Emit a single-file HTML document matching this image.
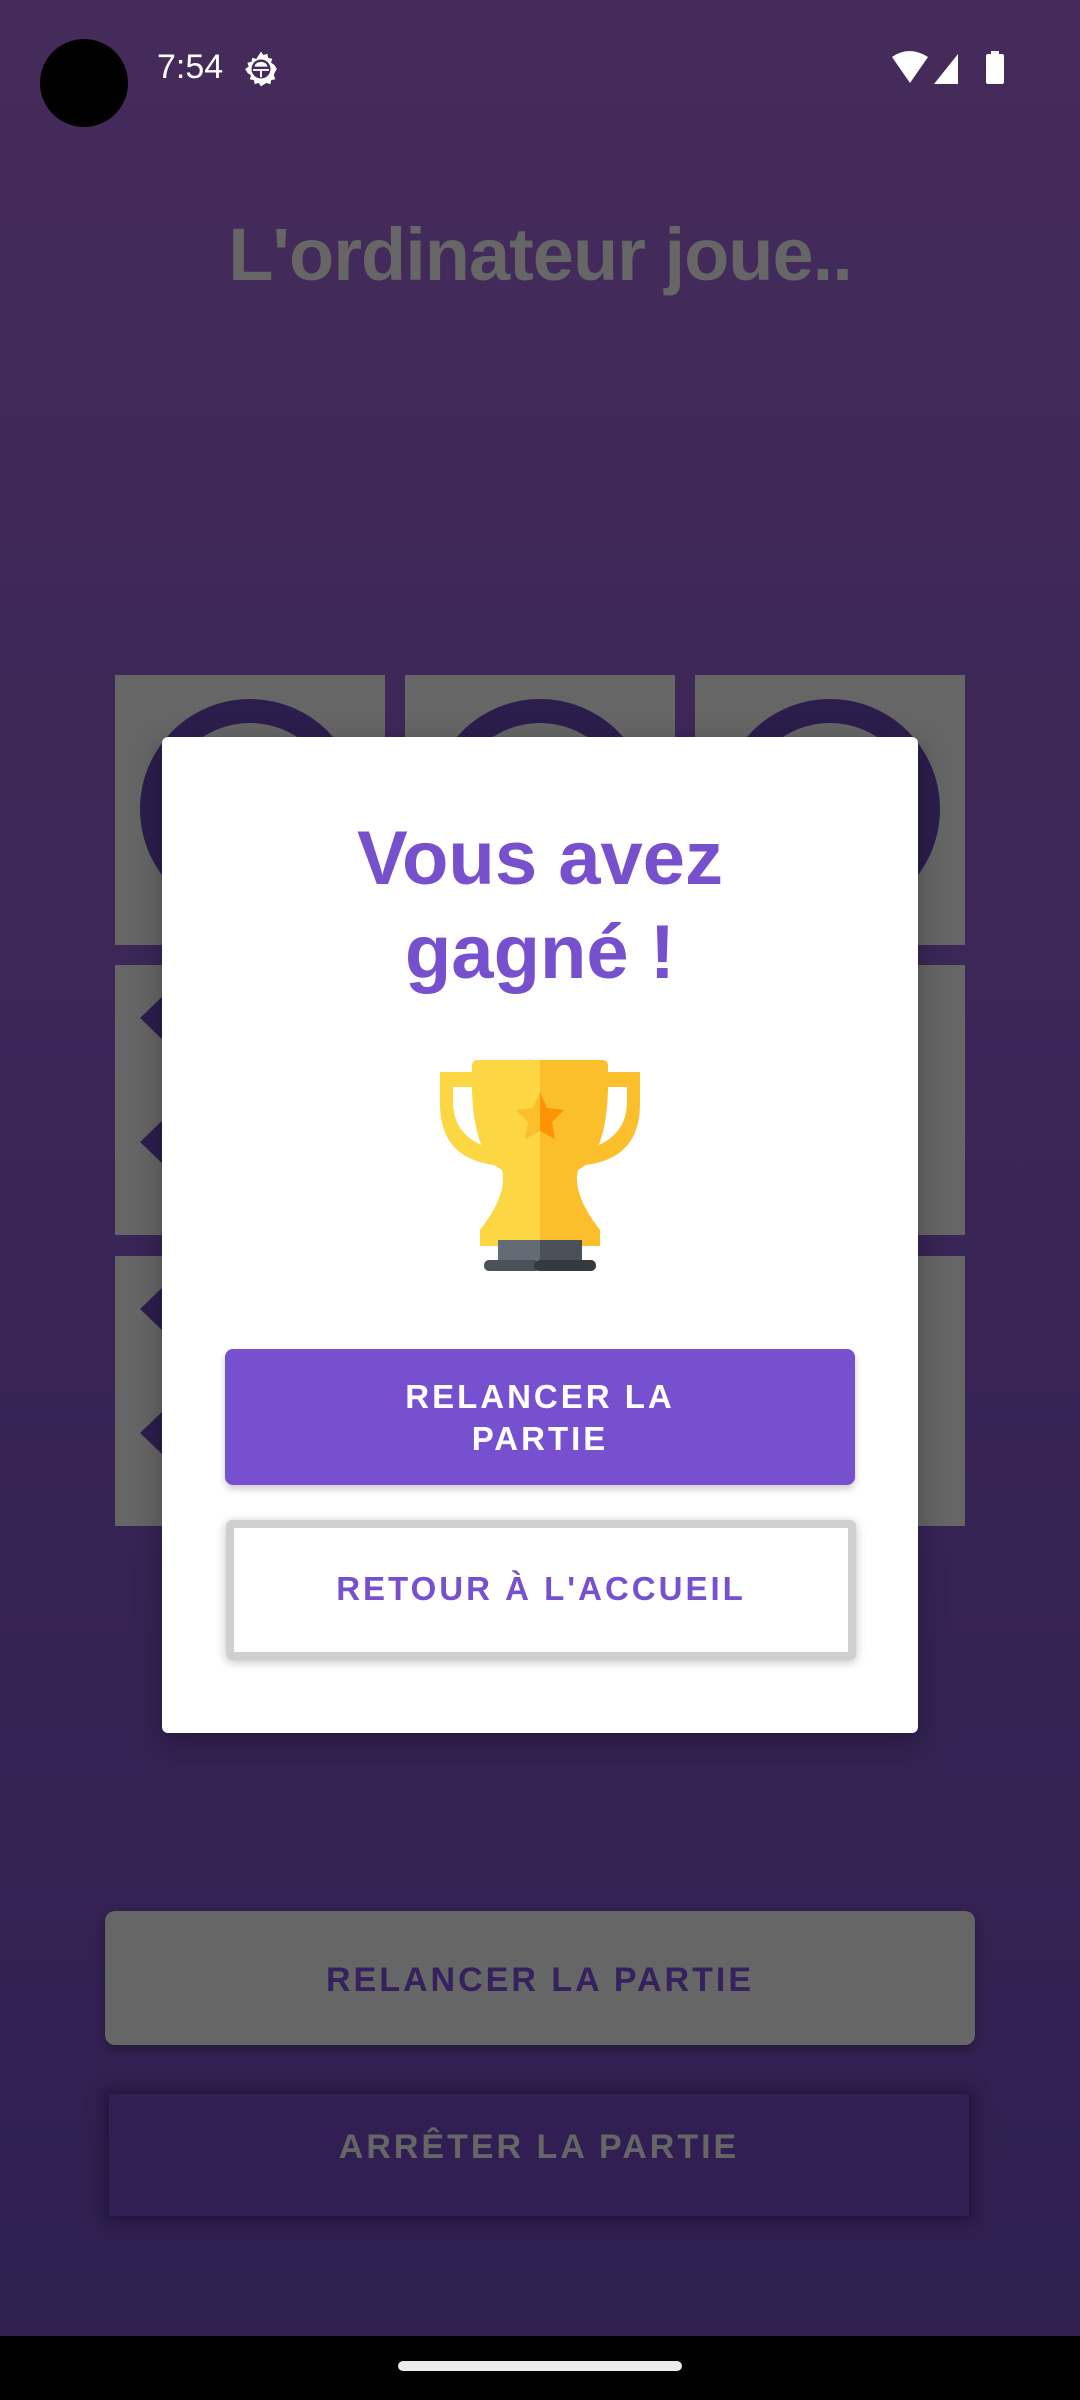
<!DOCTYPE html>
<html><head><meta charset="utf-8"><style>
*{margin:0;padding:0;box-sizing:border-box}
body{width:1080px;height:2400px;overflow:hidden;position:relative;background:linear-gradient(#452b5a 0%,#3b2758 40%,#2f1f50 100%);font-family:"Liberation Sans",Roboto,sans-serif}
.abs{position:absolute}
.cell{position:absolute;background:#666;width:270px;height:270px;overflow:hidden}
.ring{position:absolute;left:25px;top:24px;width:220px;height:220px;border-radius:50%;border:24px solid #2c1e4c}
.tri{position:absolute;width:0;height:0;border-top:23px solid transparent;border-bottom:23px solid transparent;border-right:24px solid #2c1e4c;left:25px}
.btxt{font-weight:bold;letter-spacing:3px;text-align:center}
</style></head><body>
<div class="abs" style="left:40px;top:39px;width:88px;height:88px;border-radius:50%;background:#000"></div>
<div class="abs" style="left:157px;top:48px;color:#fff;font-size:34px">7:54</div>
<svg class="abs" style="left:242px;top:50px" width="38" height="38" viewBox="0 0 24 24"><path fill="#fff" d="M12 1l1.5 2.2 2.5-.8.5 2.6 2.6.5-.8 2.5L20.5 9.5 22 12l-1.5 2.5-.3 1.5.8 2.5-2.6.5-.5 2.6-2.5-.8L12 23l-1.5-2.2-2.5.8-.5-2.6-2.6-.5.8-2.5L3.5 14.5 2 12l2.2-1.5-.8-2.5 2.6-.5.5-2.6 2.5.8z"/><circle cx="12" cy="12" r="6" fill="#452b5a"/><path fill="#fff" d="M7 12h10v1.2H12.6v4H11.4v-4H7z M8 10.5a4 3 0 0 1 8 0z"/></svg>
<svg class="abs" style="left:890px;top:50px" width="120" height="36" viewBox="0 0 120 36"><path fill="#fff" d="M2 7q17-12 36 0L20 33z"/><path fill="#fff" d="M44 34L68 4v30z"/><rect x="96" y="4" width="18" height="30" rx="2" fill="#fff"/><rect x="101" y="1" width="8" height="4" fill="#fff"/></svg>
<div class="abs" style="left:0;width:1080px;top:212px;text-align:center;color:#666;font-weight:bold;font-size:74px;letter-spacing:-1px">L'ordinateur joue..</div>

<div class="cell" style="left:115px;top:675px"><div class="ring"></div></div>
<div class="cell" style="left:405px;top:675px"><div class="ring"></div></div>
<div class="cell" style="left:695px;top:675px"><div class="ring"></div></div>
<div class="cell" style="left:115px;top:965px"><div class="tri" style="top:30px"></div><div class="tri" style="top:154px"></div></div>
<div class="cell" style="left:405px;top:965px"></div>
<div class="cell" style="left:695px;top:965px"></div>
<div class="cell" style="left:115px;top:1256px"><div class="tri" style="top:30px"></div><div class="tri" style="top:154px"></div></div>
<div class="cell" style="left:405px;top:1256px"></div>
<div class="cell" style="left:695px;top:1256px"></div>

<div class="abs" style="left:162px;top:737px;width:756px;height:996px;background:#fff;border-radius:6px;box-shadow:0 10px 30px rgba(0,0,0,.3)"></div>
<div class="abs" style="left:162px;width:756px;top:812px;text-align:center;color:#7750ce;font-weight:bold;font-size:76px;line-height:94px">Vous avez<br>gagné !</div>
<svg class="abs" style="left:434px;top:1060px" width="212" height="212" viewBox="0 0 212 212">
<path d="M6 12h56v15H19v14q0 42 50 50l4 15Q6 104 6 44z" fill="#fdd644"/>
<path d="M206 12h-56v15h43v14q0 42-50 50l-4 15q67-2 67-62z" fill="#fbbf2c"/>
<path d="M38 6q0-6 6-6h62v186H46v-16q28-36 22-60Q40 96 38 30z" fill="#fdd644"/>
<path d="M174 6q0-6-6-6h-62v186h60v-16q-28-36-22-60q28-14 30-80z" fill="#fbbf2c"/>
<path d="M106 32l7 16 17 2-12 12 3 17-15-8z" fill="#fe9305"/>
<path d="M106 32l-7 16-17 2 12 12-3 17 15-8z" fill="#fbbf2c"/>
<rect x="64" y="180" width="42" height="20" fill="#636b74"/><rect x="106" y="180" width="42" height="20" fill="#4a5158"/>
<rect x="50" y="200" width="56" height="11" rx="5" fill="#4a5158"/><rect x="100" y="200" width="62" height="11" rx="5" fill="#353a3f"/>
</svg>
<div class="abs btxt" style="left:225px;top:1349px;width:630px;height:136px;background:#7750d0;border-radius:8px;color:#fff;font-size:33px;line-height:42px;padding-top:27px;box-shadow:0 4px 8px rgba(0,0,0,.2)">RELANCER LA<br>PARTIE</div>
<div class="abs" style="left:226px;top:1520px;width:630px;height:140px;border:8px solid #cfcfcf;border-radius:6px;box-shadow:0 2px 10px rgba(0,0,0,.25)"></div>
<div class="abs btxt" style="left:234px;top:1536px;width:614px;height:116px;background:#fff;color:#7750d0;font-size:33px;line-height:106px">RETOUR À L'ACCUEIL</div>

<div class="abs btxt" style="left:105px;top:1911px;width:870px;height:134px;background:#666;border-radius:10px;color:#34215d;font-size:34px;line-height:138px;box-shadow:0 4px 10px rgba(0,0,0,.3)">RELANCER LA PARTIE</div>
<div class="abs btxt" style="left:109px;top:2094px;width:860px;height:122px;background:#311f53;color:#666;font-size:34px;line-height:106px;box-shadow:0 0 14px 4px rgba(20,10,40,.6)">ARRÊTER LA PARTIE</div>

<div class="abs" style="left:0;top:2336px;width:1080px;height:64px;background:#000"></div>
<div class="abs" style="left:398px;top:2361px;width:284px;height:10px;border-radius:5px;background:#ececec"></div>
</body></html>
